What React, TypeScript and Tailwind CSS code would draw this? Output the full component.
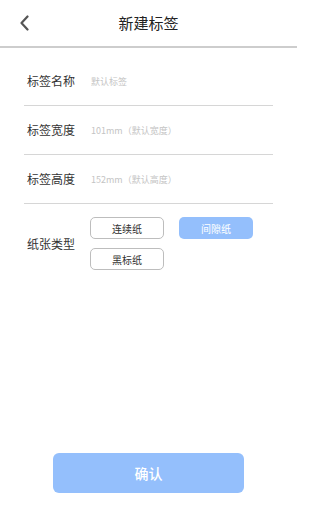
import { useState } from "react";

const font = { fontFamily: '"Noto Sans CJK SC", "Noto Sans", sans-serif' };

const Row = ({ label, placeholder }: { label: string; placeholder: string }) => {
    return (
        <div className="flex h-[49px] items-center border-b border-[#d6d6d6] pl-[3px]">
            <span className="w-[64px] text-[12px] leading-none text-[#333]">{label}</span>
            <input
                className="min-w-0 flex-1 bg-transparent text-[9px] leading-none text-[#333] outline-none placeholder:text-[#c4c4c4]"
                placeholder={placeholder}
            />
        </div>
    );
};

const App = () => {
    const [paper, setPaper] = useState("间隙纸");
    const types = ["连续纸", "间隙纸", "黑标纸"];

    return (
        <div className="flex min-h-[528px] w-[297px] flex-col bg-white" style={font}>
            {/* header */}
            <div className="flex h-[48px] items-center border-b-2 border-[#cdcdcd]">
                <div className="w-[60px] pl-[19px]">
                    <svg width="11" height="16" viewBox="0 0 11 16" fill="none">
                        <path d="M8.5 1.5L2.5 8L8.5 14.5" stroke="#555" strokeWidth="2.2" strokeLinecap="round" strokeLinejoin="round" />
                    </svg>
                </div>
                <div className="flex-1 text-center text-[15px] text-[#222]">新建标签</div>
                <div className="w-[60px]" />
            </div>

            {/* form */}
            <div className="mt-[9px] px-[24px]">
                <Row label="标签名称" placeholder="默认标签" />
                <Row label="标签宽度" placeholder="101mm（默认宽度）" />
                <Row label="标签高度" placeholder="152mm（默认高度）" />

                <div className="mt-[13px] flex items-center pl-[3px]">
                    <span className="w-[63px] text-[12px] leading-none text-[#333]">纸张类型</span>
                    <div className="grid grid-cols-[74px_74px] gap-x-[15px] gap-y-[9px]">
                        {types.map((t) => (
                            <button
                                key={t}
                                onClick={() => setPaper(t)}
                                className={
                                    paper === t
                                        ? "flex h-[22px] items-center justify-center rounded-[5px] bg-[#94bffc] text-[10px] text-white"
                                        : "flex h-[22px] items-center justify-center rounded-[5px] border border-[#bdbdbd] bg-white text-[10px] text-[#333]"
                                }
                            >
                                {t}
                            </button>
                        ))}
                    </div>
                </div>
            </div>

            {/* confirm */}
            <div className="mt-auto flex justify-center pb-[35px]">
                <button className="h-[40px] w-[191px] rounded-[6px] bg-[#94bffc] text-[14px] font-medium text-white">
                    确认
                </button>
            </div>
        </div>
    );
};

export default App;
